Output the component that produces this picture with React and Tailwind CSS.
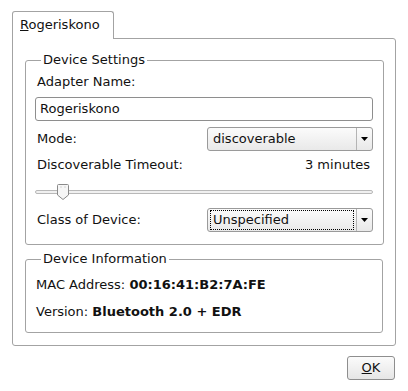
import React from 'react';

// Bluetooth adapter properties dialog (GTK style)

const Combo = ({ value, focused }) => (
    <div className="flex h-[24px] w-[166px] rounded-[3px] border border-[#9a9a9a] bg-gradient-to-b from-[#fbfbfb] to-[#e9e9e9]">
        <div className="flex flex-1 items-center px-[2px]">
            <div className={`flex h-[20px] flex-1 items-center pl-[2px] ${focused ? 'border border-dotted border-black' : 'border border-transparent'}`}>
                {value}
            </div>
        </div>
        <div className="flex w-[16px] items-center justify-center border-l border-[#b4b4b4]">
            <svg width="7" height="4" viewBox="0 0 7 4">
                <polygon points="0,0 7,0 3.5,4" fill="#000" />
            </svg>
        </div>
    </div>
);

const Group = ({ title, children, className }) => (
    <fieldset className={`rounded-[3px] border border-[#a3a3a3] pl-[9px] pr-[10px] ${className}`}>
        <legend className="ml-[6px] px-[2px] leading-[16px]">{title}</legend>
        {children}
    </fieldset>
);

export default function App() {
    return (
        <div className="h-[391px] w-[408px] bg-white text-[13px] text-[#111] font-['DejaVu_Sans',sans-serif]">
            <div className="px-[12px] pt-[11px]">
                <div className="relative z-10 -mb-px flex h-[28px] w-[102px] items-center rounded-t-[3px] border border-b-0 border-[#a3a3a3] bg-white pl-[7px] pb-[1px]">
                    <span><span className="underline">R</span>ogeriskono</span>
                </div>
                <div className="h-[308px] rounded-b-[3px] rounded-tr-[3px] border border-[#a3a3a3] px-[12px] pt-[13px]">
                    <Group title="Device Settings" className="pb-[12px]">
                        <div className="mt-[6px] h-[16px] pl-[2px] leading-[16px]">Adapter Name:</div>
                        <div className="mt-[7px] flex h-[24px] items-center rounded-[3px] border border-[#8e8e8e] bg-white pl-[4px]">
                            Rogeriskono
                        </div>
                        <div className="mt-[6px] flex h-[24px] items-center justify-between pl-[2px]">
                            <span>Mode:</span>
                            <Combo value="discoverable" />
                        </div>
                        <div className="mt-[6px] flex h-[16px] items-center justify-between pl-[2px] pr-[3px] leading-[16px]">
                            <span>Discoverable Timeout:</span>
                            <span>3 minutes</span>
                        </div>
                        <div className="mt-[9px] flex h-[20px] items-center">
                            <svg width="338" height="20" viewBox="0 0 338 20">
                                <rect x="0.5" y="8.5" width="337" height="3" rx="1.5" fill="#f0f0f0" stroke="#b8b8b8" />
                                <path d="M22.5 3.5 Q22.5 2.5 23.5 2.5 L32.5 2.5 Q33.5 2.5 33.5 3.5 L33.5 13 L28 17.5 L22.5 13 Z" fill="#f6f6f6" stroke="#8a8a8a" />
                                <line x1="25.5" y1="5" x2="26.5" y2="5" stroke="#b0b0b0" />
                                <line x1="29.5" y1="5" x2="30.5" y2="5" stroke="#b0b0b0" />
                            </svg>
                        </div>
                        <div className="mt-[6px] flex h-[24px] items-center justify-between pl-[2px]">
                            <span>Class of Device:</span>
                            <Combo value="Unspecified" focused />
                        </div>
                    </Group>
                    <Group title="Device Information" className="mt-[6px] pb-[12px]">
                        <div className="mt-[10px] h-[16px] pl-[1px] leading-[16px]">
                            MAC Address: <b>00:16:41:B2:7A:FE</b>
                        </div>
                        <div className="mt-[11px] h-[16px] pl-[1px] leading-[16px]">
                            Version: <b>Bluetooth 2.0 + EDR</b>
                        </div>
                    </Group>
                </div>
                <div className="mt-[10px] flex justify-end pr-[1px]">
                    <button className="flex h-[24px] w-[48px] items-center justify-center rounded-[3px] border border-[#8e8e8e] bg-gradient-to-b from-[#fbfbfb] to-[#e6e6e6]">
                        <span><span className="underline">O</span>K</span>
                    </button>
                </div>
            </div>
        </div>
    );
}
